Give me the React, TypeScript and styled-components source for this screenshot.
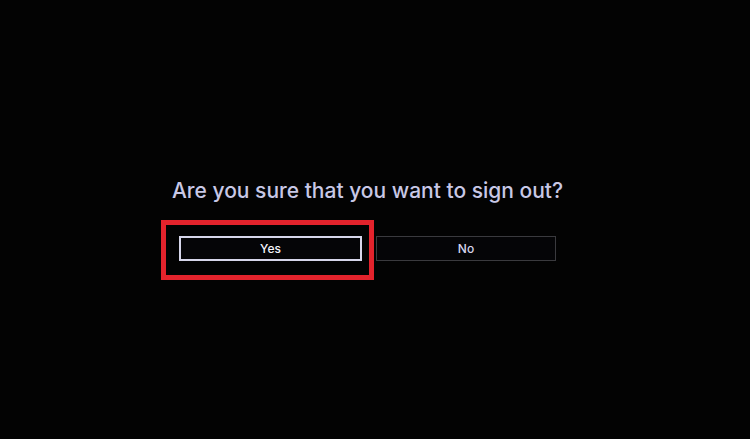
import React from "react";
import styled, { createGlobalStyle } from "styled-components";

const Global = createGlobalStyle`
  html, body {
    margin: 0;
    padding: 0;
    background: #030303;
    width: 100%;
    height: 100%;
  }
  #root { height: 100%; }
`;

const Screen = styled.div`
  height: 439px;
  width: 750px;
  background: #030303;
  display: flex;
  flex-direction: column;
  align-items: center;
  box-sizing: border-box;
  padding-top: 177px;
  padding-right: 15px;
  font-family: Inter, "Noto Sans", sans-serif;
`;

const Title = styled.h1`
  margin: 0;
  font-size: 21px;
  font-weight: 500;
  line-height: 28px;
  color: #c8c8e6;
  letter-spacing: 0;
`;

const Buttons = styled.div`
  margin-top: 31px;
  display: flex;
  gap: 14px;
`;

const Focusable = styled.div`
  position: relative;
  display: flex;
`;

const FocusRing = styled.div`
  position: absolute;
  left: -18px;
  right: -12px;
  top: -16px;
  bottom: -19px;
  border: 5px solid #e3232c;
  pointer-events: none;
`;

const Button = styled.button<{ $focused?: boolean }>`
  width: ${(p) => (p.$focused ? 183 : 180)}px;
  height: 25px;
  box-sizing: border-box;
  background: #050507;
  border: ${(p) => (p.$focused ? "2px solid #d6d6ea" : "1px solid #3a3a3e")};
  color: ${(p) => (p.$focused ? "#f4f4fa" : "#d6d6ee")};
  font-family: Inter, "Noto Sans", sans-serif;
  font-size: 12px;
  font-weight: 500;
  padding: 0;
  display: flex;
  align-items: center;
  justify-content: center;
`;

export default function App() {
  return (
    <>
      <Global />
      <Screen>
        <Title>Are you sure that you want to sign out?</Title>
        <Buttons>
          <Focusable>
            <Button $focused>Yes</Button>
            <FocusRing />
          </Focusable>
          <Button>No</Button>
        </Buttons>
      </Screen>
    </>
  );
}
